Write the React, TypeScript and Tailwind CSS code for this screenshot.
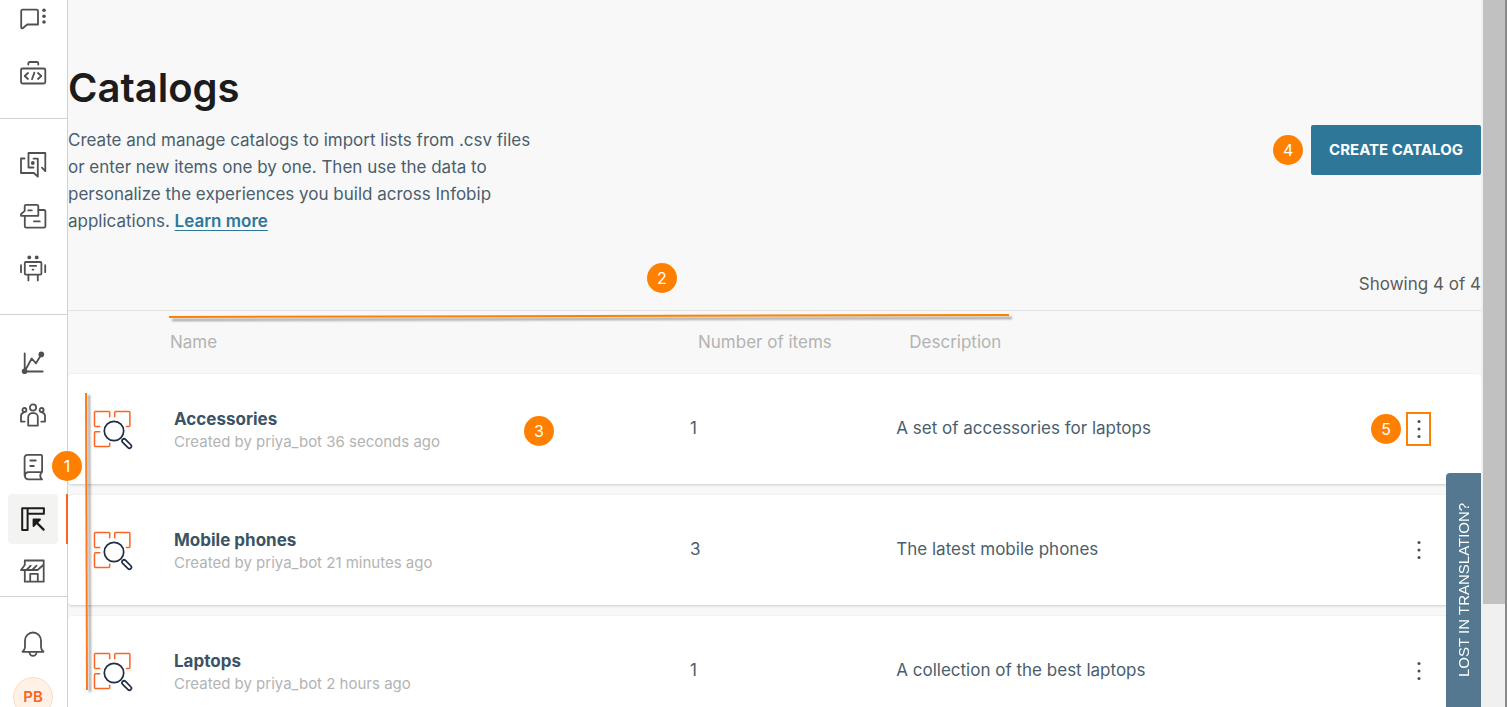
import React from 'react';

interface Catalog {
  name: string;
  created: string;
  items: number;
  description: string;
}

const CATALOGS: Catalog[] = [
  { name: 'Accessories', created: 'Created by priya_bot 36 seconds ago', items: 1, description: 'A set of accessories for laptops' },
  { name: 'Mobile phones', created: 'Created by priya_bot 21 minutes ago', items: 3, description: 'The latest mobile phones' },
  { name: 'Laptops', created: 'Created by priya_bot 2 hours ago', items: 1, description: 'A collection of the best laptops' },
];

const Icon = ({ children }: { children: React.ReactNode }) => (
  <svg viewBox="0 0 28 28" className="h-7 w-7" fill="none" stroke="currentColor" strokeWidth="1.8" strokeLinecap="round" strokeLinejoin="round" aria-hidden="true">
    {children}
  </svg>
);

const ChatIcon = () => (
  <Icon>
    <path d="M3.5 5.7h14a1.5 1.5 0 0 1 1.5 1.5v13.3H8.2L4 24a1 1 0 0 1-1.8-.7V7a1.3 1.3 0 0 1 1.3-1.3z" />
    <g fill="currentColor" stroke="none">
      <circle cx="25" cy="6.3" r="1.8" />
      <circle cx="25" cy="12.2" r="1.8" />
      <circle cx="25" cy="18" r="1.8" />
    </g>
  </Icon>
);

const CodeIcon = () => (
  <Icon>
    <rect x="2" y="9.5" width="24.3" height="15" rx="1.5" />
    <path d="M9.3 5.5v-1a1.5 1.5 0 0 1 1.5-1.5h7a1.5 1.5 0 0 1 1.5 1.5v1" />
    <path d="M9 14l-3.3 3L9 20M19 14l3.3 3-3.3 3M15.4 13.6l-2.4 6.6" />
  </Icon>
);

const MomentsIcon = () => (
  <Icon>
    <path d="M5.5 8.5H2V23h12.8l4 3.7V8.7h-4.3" />
    <path d="M14.5 17.5h-5V3h16.8v18.2l-3.4-3.6" />
    <circle cx="13.8" cy="13" r="1.9" fill="currentColor" stroke="none" />
  </Icon>
);

const ConversationsIcon = () => (
  <Icon>
    <path d="M7 2.8h10.8a1.5 1.5 0 0 1 1.5 1.5v9.5H2v-1.6l3.7-3.4V4A1.3 1.3 0 0 1 7 2.8z" />
    <path d="M19.5 8H25a1.4 1.4 0 0 1 1.4 1.4v14.8a1.4 1.4 0 0 1-1.4 1.4H7.2a1.4 1.4 0 0 1-1.4-1.4V14M9.2 8.4h3.6M15 19.4h5.8" />
  </Icon>
);

const BotIcon = () => (
  <Icon>
    <rect x="5.8" y="8" width="16.6" height="12.6" rx="1" />
    <path d="M2 11.2v7M26.2 11.2v7M9.4 20.8v5.6M18.8 20.8v5.6M10.8 11.8h6.4M13.5 15.6h1" />
    <g fill="currentColor" stroke="none">
      <circle cx="10.3" cy="3.4" r="1.9" />
      <circle cx="17.7" cy="3.4" r="1.9" />
    </g>
  </Icon>
);

const AnalyticsIcon = () => (
  <Icon>
    <path d="M5.7 4.3v18.2h18M5.7 22.3l7-12.8 4.3 4.8 5.3-8.8" />
    <g fill="currentColor" stroke="none">
      <circle cx="5.6" cy="22.3" r="2.8" />
      <circle cx="22.3" cy="5.4" r="2.8" />
    </g>
  </Icon>
);

const PeopleIcon = () => (
  <Icon>
    <circle cx="14" cy="6.5" r="3.1" />
    <path d="M9.2 24.6v-8.4a4 4 0 0 1 4-4h1.6a4 4 0 0 1 4 4v8.4z" />
    <circle cx="5.4" cy="9" r="2" />
    <circle cx="22.6" cy="9" r="2" />
    <path d="M5.7 20.6H2v-5.4c0-1.8.9-3 2.5-3.5M22.3 20.6H26v-5.4c0-1.8-.9-3-2.5-3.5" />
  </Icon>
);

const BookIcon = () => (
  <Icon>
    <path d="M5.6 22.8V4.5a2.7 2.7 0 0 1 2.7-2.7h13.5a1.3 1.3 0 0 1 1.3 1.3v16H9a3.7 3.7 0 0 0 0 7.3h14c-2.3-2-2.3-4.5-.3-7.3M11.3 7.5h5.5M11.3 13h3.5" />
  </Icon>
);

const CatalogIcon = () => (
  <Icon>
    <path d="M8.6 8.8V25H3.2V3.2h21.7v5.6H8.6V3.2" strokeWidth="2" />
    <path d="M24.6 24.6l-8-8" strokeWidth="2.2" />
    <path d="M14.5 14.5h6.5l-6.5 6.5z" fill="currentColor" />
  </Icon>
);

const StoreIcon = () => (
  <Icon>
    <path d="M5.8 13.5v11.2h18.9V3.5H5.8V8L2 13h5.5l4.2-4.3M7.5 13h5.7l4.3-4.3M13.2 13h5.3L24.3 8M11.2 24.5v-7.6h7.6v7.6" />
  </Icon>
);

const BellIcon = () => (
  <Icon>
    <path d="M3.5 21.8C5 20.6 6 19.3 6 17v-6.5a8 8 0 0 1 16 0V17c0 2.3 1 3.6 2.5 4.8z" />
    <path d="M10.5 22.3a3.5 3.5 0 0 0 7 0" />
  </Icon>
);

const CatalogSearchIcon = () => (
  <svg viewBox="0 0 40 40" className="h-10 w-10" fill="none" strokeLinecap="round" strokeLinejoin="round" aria-hidden="true">
    <path d="M6.8 16.5H2.5a1 1 0 0 1-1-1v-13a1 1 0 0 1 1-1h13.2a1 1 0 0 1 1 1v4.3M21.7 6.8V2.5a1 1 0 0 1 1-1h13.2a1 1 0 0 1 1 1v13a1 1 0 0 1-1 1h-2.5M6.8 21.7H2.5a1 1 0 0 0-1 1v12.8a1 1 0 0 0 1 1h13.2a1 1 0 0 0 1-1v-2.3" stroke="#fc6423" strokeWidth="1.5" />
    <circle cx="21" cy="21" r="9.7" stroke="#1f2d45" strokeWidth="1.7" />
    <rect x="28" y="31.5" width="11.5" height="4" rx="2" transform="rotate(45 33.7 33.5)" stroke="#1f2d45" strokeWidth="1.7" />
  </svg>
);

const Badge = ({ n, className = '' }: { n: number; className?: string }) => (
  <span className={`flex h-[30px] w-[30px] items-center justify-center rounded-full bg-[#ff8000] text-base text-white ${className}`}>{n}</span>
);

interface NavItemProps {
  label: string;
  active?: boolean;
  badge?: number;
  children: React.ReactNode;
}

const NavItem = ({ label, active, badge, children }: NavItemProps) => (
  <li className={`relative -mr-px border-r-2 pl-2 ${active ? 'border-[#fc6423]' : 'border-transparent'}`}>
    <a
      href="#"
      aria-label={label}
      className={`flex h-[50px] w-[50px] items-center justify-center rounded-sm ${active ? 'bg-[#f3f3f2] text-[#1c1c1c]' : 'text-[#505050]'}`}
    >
      {children}
    </a>
    {badge && <Badge n={badge} className="absolute top-[9px] left-[52px]" />}
  </li>
);

const Sidebar = () => (
  <nav className="relative z-10 w-[68px] shrink-0 border-r border-[#d2d2d2] bg-white">
    <ul className="-mt-[7px] flex flex-col gap-[5px] border-b border-[#d2d2d2] pb-5">
      <NavItem label="Messages"><ChatIcon /></NavItem>
      <NavItem label="Developer tools"><CodeIcon /></NavItem>
    </ul>
    <ul className="flex flex-col gap-0.5 border-b border-[#d2d2d2] pt-5 pb-[21px]">
      <NavItem label="Moments"><MomentsIcon /></NavItem>
      <NavItem label="Conversations"><ConversationsIcon /></NavItem>
      <NavItem label="Answers"><BotIcon /></NavItem>
    </ul>
    <ul className="flex flex-col gap-0.5 border-b border-[#d2d2d2] pt-[23px]">
      <NavItem label="Analyze"><AnalyticsIcon /></NavItem>
      <NavItem label="People"><PeopleIcon /></NavItem>
      <NavItem label="Content" badge={1}><BookIcon /></NavItem>
      <NavItem label="Catalogs" active><CatalogIcon /></NavItem>
      <NavItem label="Exchange"><StoreIcon /></NavItem>
    </ul>
    <div className="flex flex-col items-center gap-2 pt-[22px] pr-px">
      <button type="button" aria-label="Notifications" className="flex h-[50px] w-[50px] items-center justify-center text-[#505050]">
        <BellIcon />
      </button>
      <button type="button" className="h-10 w-10 rounded-full border border-[#fbdcc4] bg-[#fff1e6] text-[15px] font-semibold text-[#fc6423]">
        PB
      </button>
    </div>
  </nav>
);

const CatalogRow = ({ catalog, annotated }: { catalog: Catalog; annotated: boolean }) => (
  <tr className="h-[110px] rounded bg-white shadow-[0_1px_3px_rgba(0,0,0,0.18)]">
    <td className="rounded-l pt-0.5 pl-[25px]"><CatalogSearchIcon /></td>
    <td className="relative pl-1">
      <div className="text-[17px] leading-[26px] font-bold text-[#3b5366]">{catalog.name}</div>
      <div className="text-[15px] leading-5 text-[#b3b3b3]">{catalog.created}</div>
      {annotated && <Badge n={3} className="absolute top-[42px] left-[354px]" />}
    </td>
    <td>{catalog.items}</td>
    <td>{catalog.description}</td>
    <td className="relative rounded-r">
      {annotated && <Badge n={5} className="absolute top-10 right-20" />}
      <button
        type="button"
        aria-label={`Actions for ${catalog.name}`}
        className={`mr-[50px] ml-auto flex h-[34px] w-[25px] items-center justify-center border-2 ${annotated ? 'border-[#ff8000]' : 'border-transparent'}`}
      >
        <svg viewBox="0 0 4 20" className="h-5 w-1" fill="#4d4d4d" aria-hidden="true">
          <circle cx="2" cy="2.5" r="1.5" />
          <circle cx="2" cy="10" r="1.5" />
          <circle cx="2" cy="17.5" r="1.5" />
        </svg>
      </button>
    </td>
  </tr>
);

const App: React.FC = () => {
  return (
    <div className="flex h-screen overflow-hidden bg-[#f8f8f8] font-['Inter',sans-serif] text-[17px] text-[#4a5e6d]">
      <Sidebar />

      <main className="min-w-0 flex-1 overflow-hidden">
        <header className="flex items-start justify-between pt-[63px]">
          <div className="max-w-[476px]">
            <h1 className="text-[40px] leading-[50px] font-semibold text-[#1c1c1c]">Catalogs</h1>
            <p className="mt-[14px] leading-[27px]">
              Create and manage catalogs to import lists from .csv files or enter new items one by one. Then use the data to personalize the experiences you build across Infobip applications.{' '}
              <a href="#" className="font-semibold text-[#2e7799] underline underline-offset-3">Learn more</a>
            </p>
          </div>
          <div className="mt-[62px] flex items-center gap-2">
            <Badge n={4} />
            <button type="button" className="h-[50px] rounded-xs bg-[#2e7799] px-[18px] text-[15px] font-bold text-white">CREATE CATALOG</button>
          </div>
        </header>

        <section className="relative mt-9">
          <p className="border-b border-[#e2e2e2] pb-[13px] text-right leading-[26px] text-[#5c5c5c]">Showing 4 of 4</p>
          <Badge n={2} className="absolute -top-2 left-[579px]" />

          {/* Callout lines over the header and the left edge of the rows */}
          <svg viewBox="0 0 860 16" className="absolute top-[37px] left-[100px] h-4 w-[860px] drop-shadow-[3px_3px_1px_rgba(0,0,0,0.4)]" aria-hidden="true">
            <line x1="1" y1="9" x2="841" y2="7" stroke="#ff8000" strokeWidth="2" />
          </svg>
          <svg viewBox="0 0 12 300" className="absolute top-[122px] left-[14px] z-10 h-[300px] w-3 drop-shadow-[3px_2px_1px_rgba(0,0,0,0.4)]" aria-hidden="true">
            <line x1="4" y1="0" x2="5" y2="297" stroke="#ff7a1a" strokeWidth="2" />
          </svg>

          <table className="w-full table-fixed border-separate border-spacing-x-0 border-spacing-y-[11px] text-left">
            <thead>
              <tr className="h-[41px] text-[#b3b3b3]">
                <th className="w-[102px]" aria-label="Icon"></th>
                <th className="w-[36.8%] font-normal">Name</th>
                <th className="w-[14.6%] pl-2 font-normal">Number of items</th>
                <th className="pl-[13px] font-normal">Description</th>
                <th className="w-[130px]" aria-label="Actions"></th>
              </tr>
            </thead>
            <tbody>
              {CATALOGS.map((catalog, i) => (
                <CatalogRow key={catalog.name} catalog={catalog} annotated={i === 0} />
              ))}
            </tbody>
          </table>
        </section>
      </main>

      <div className="w-[26px] shrink-0 border-r-2 border-[#8a8a8a] bg-[#f0f0f0] pl-0.5" aria-hidden="true">
        <div className="h-[85.4%] bg-[#c1c1c1]"></div>
      </div>

      <button
        type="button"
        className="fixed right-[26px] bottom-0 z-20 h-[234px] w-[35px] rotate-180 rounded-br-sm bg-[#537890] font-['Liberation_Sans',sans-serif] text-[15px] leading-[35px] text-white [writing-mode:vertical-rl]"
      >
        LOST IN TRANSLATION?
      </button>
    </div>
  );
};

export default App;
